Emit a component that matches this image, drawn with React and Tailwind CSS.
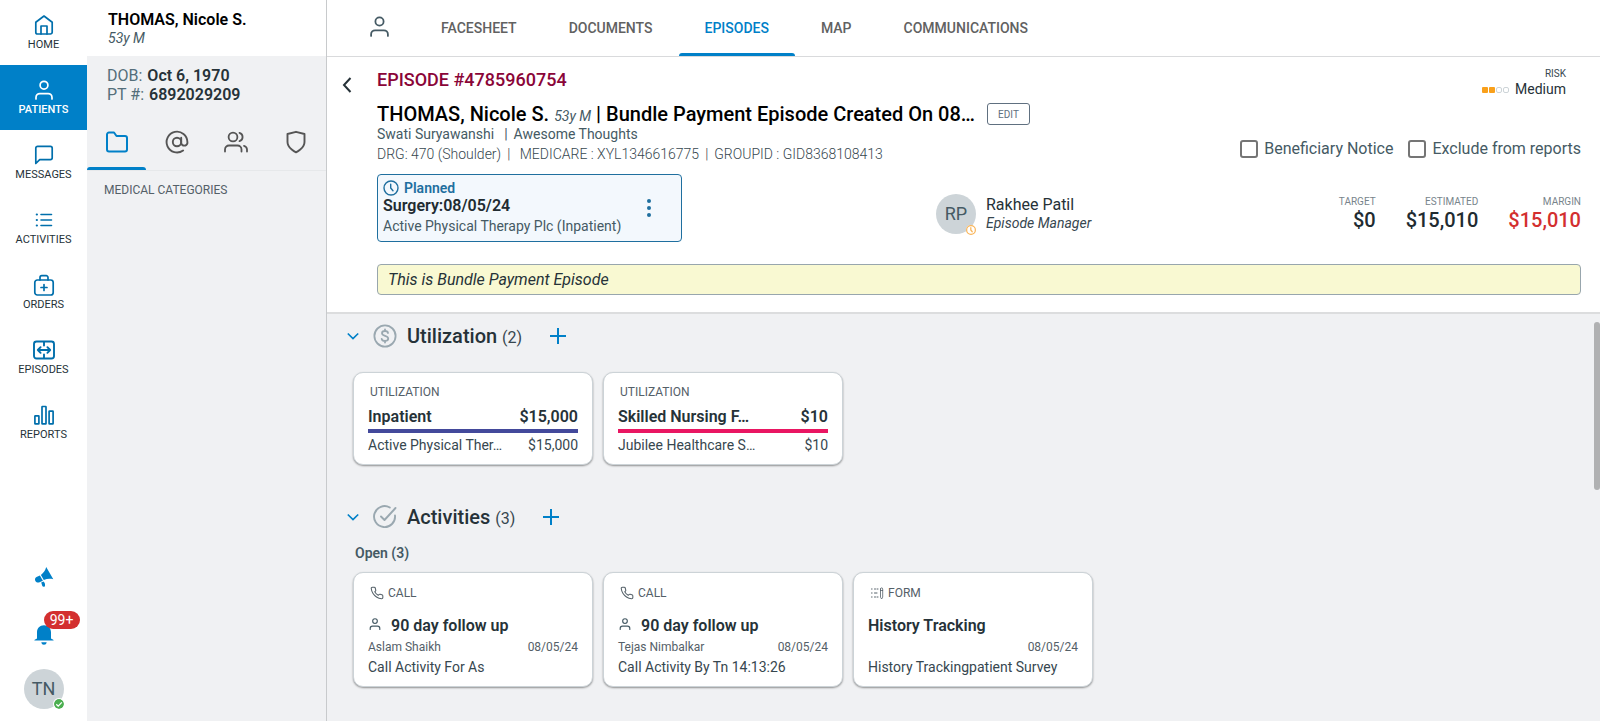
import React from "react";

function Icon({ size = 20, box = 20, stroke = 1.5, className = "", children }) {
  return (
    <svg
      width={size}
      height={size}
      viewBox={`0 0 ${box} ${box}`}
      fill="none"
      stroke="currentColor"
      strokeWidth={stroke}
      strokeLinecap="round"
      strokeLinejoin="round"
      className={`shrink-0 ${className}`}
      aria-hidden="true"
    >
      {children}
    </svg>
  );
}

const HomeIcon = () => (
  <Icon stroke={1.7}>
    <path d="M1.8 7.2 10 1l8.2 6.2v10a1.8 1.8 0 0 1-1.8 1.8H3.6a1.8 1.8 0 0 1-1.8-1.8z" />
    <path d="M7 19v-8h6v8" />
  </Icon>
);
const PersonIcon = ({ size = 20, stroke = 1.7 }) => (
  <Icon size={size} stroke={stroke}>
    <circle cx="10" cy="5.2" r="3.9" />
    <path d="M2 19v-1.6A3.8 3.8 0 0 1 5.8 13.6h8.4a3.8 3.8 0 0 1 3.8 3.8V19" />
  </Icon>
);
const MessageIcon = () => (
  <Icon stroke={1.7}>
    <path d="M1.8 18.5V3.200A1.800 1.800 0 0 1 3.600 1.400h12.800a1.800 1.800 0 0 1 1.800 1.800v9.600a1.800 1.800 0 0 1-1.800 1.800H5.700z" />
  </Icon>
);
const ListIcon = () => (
  <Icon stroke={1.6}>
    <path d="M7 4.500h10.500M7 10h10.500M7 15.500h10.500" />
    <path d="M2.800 4.500h.1M2.800 10h.1M2.800 15.500h.1" strokeWidth="2.200" />
  </Icon>
);
const OrdersIcon = () => (
  <Icon size={22} box={22} stroke={1.7}>
    <rect x="1.800" y="6" width="18.400" height="15" rx="2.500" />
    <path d="M7 6V3.500A1.800 1.800 0 0 1 8.800 1.700h4.400A1.800 1.800 0 0 1 15 3.500V6M11 10.500v6M8 13.500h6" />
  </Icon>
);
const EpisodesIcon = () => (
  <Icon size={22} box={22} stroke={1.9}>
    <rect x="1" y="2.500" width="20" height="17" rx="2.500" />
    <path d="M11 3v3.500M11 15.500V19M4.800 11h12.400M7.600 8.200 4.800 11l2.800 2.800M14.400 8.200l2.800 2.800-2.800 2.800" />
  </Icon>
);
const ReportsIcon = () => (
  <Icon stroke={1.7}>
    <rect x=".9" y="10.800" width="4" height="8" rx=".4" />
    <rect x="8" y="1.500" width="4" height="17.300" rx=".4" />
    <rect x="15.100" y="6.200" width="4" height="12.600" rx=".4" />
  </Icon>
);
const FolderIcon = () => (
  <Icon size={24} box={24} stroke={2}>
    <path d="M22 19.500a2 2 0 0 1-2 2H4a2 2 0 0 1-2-2v-15a2 2 0 0 1 2-2h5l2.500 3.500H20a2 2 0 0 1 2 2z" />
  </Icon>
);
const AtIcon = () => (
  <Icon size={24} box={24} stroke={1.900}>
    <circle cx="12" cy="12" r="4.200" />
    <path d="M16.200 7.800v5.400a3.200 3.200 0 0 0 6.200 0V12a10.400 10.400 0 1 0-4.300 8.500" />
  </Icon>
);
const PeopleIcon = () => (
  <Icon size={24} box={24} stroke={1.800}>
    <circle cx="9" cy="7" r="4.400" />
    <path d="M1 21.500v-2a4 4 0 0 1 4-4h8.500a4 4 0 0 1 4 4v2M15.500 2.800a4.400 4.400 0 0 1 0 8.400M20 15.800a4 4 0 0 1 3 3.800v1.900" />
  </Icon>
);
const ShieldIcon = () => (
  <Icon size={24} box={24} stroke={1.900}>
    <path d="M12 22.300s8.500-3.800 8.500-10.300V4L12 1.800 3.500 4v8c0 6.500 8.500 10.300 8.500 10.300z" />
  </Icon>
);
const ClockIcon = ({ size = 16, stroke = 1.400 }) => (
  <Icon size={size} box={16} stroke={stroke}>
    <circle cx="8" cy="8" r="7" />
    <path d="M7.700 4.200V8l2.300 2.800" />
  </Icon>
);
const PhoneIcon = () => (
  <Icon size={14} box={24} stroke={1.800}>
    <path d="M22 16.920v3a2 2 0 0 1-2.180 2 19.790 19.790 0 0 1-8.630-3.070 19.500 19.500 0 0 1-6-6 19.790 19.790 0 0 1-3.070-8.670A2 2 0 0 1 4.110 2h3a2 2 0 0 1 2 1.720c.127.960.361 1.903.700 2.810a2 2 0 0 1-.450 2.110L8.090 9.910a16 16 0 0 0 6 6l1.270-1.270a2 2 0 0 1 2.110-.450c.907.339 1.850.573 2.810.700A2 2 0 0 1 22 16.920z" />
  </Icon>
);
const FormIcon = () => (
  <Icon size={14} box={14} stroke={1}>
    <path d="M1.500 3h.6M1.500 7h.6M1.500 11h.6M4.500 3h1M7 3h1M4.500 7h2.500M4.500 11h1M7 11h1" />
    <path d="M10.500 3v8.200l1.100 1.800 1.100-1.800V3a1.100 1.100 0 0 0-2.200 0zM10.500 4.500h2.200" strokeWidth=".8" />
  </Icon>
);
const DollarIcon = () => (
  <Icon size={24} box={24} stroke={1.800}>
    <circle cx="12" cy="12" r="10.600" />
    <path d="M15 9c-.2-1.300-1.300-2-3-2s-3 .9-3 2.300c0 3.400 6.200 1.900 6.200 5.300 0 1.500-1.300 2.400-3.200 2.400s-3.100-.8-3.300-2.200M12 5.400V7M12 17v1.600" />
  </Icon>
);
const CheckCircleIcon = () => (
  <Icon size={24} box={24} stroke={1.900}>
    <path d="M22 10.500a10.500 10.500 0 1 1-5.200-8" />
    <path d="m8 11.500 3.500 3.500L22.500 3" />
  </Icon>
);
const ChevronDown = () => (
  <Icon size={12} box={12} stroke={1.700}>
    <path d="M.8 3.500 6 8.500l5.200-5" strokeLinecap="butt" strokeLinejoin="miter" />
  </Icon>
);
const PlusIcon = () => (
  <Icon size={16} box={16} stroke={2}>
    <path d="M8 0v16M0 8h16" strokeLinecap="butt" />
  </Icon>
);
const MegaphoneIcon = () => (
  <svg width="20" height="20" viewBox="0 0 20 20" className="shrink-0" fill="currentColor" aria-hidden="true">
    <path d="M12.200 0 19.300 12.200C16 11.400 13 11.600 9.800 12.900L6.900 7.900C9.500 6 11.300 3.500 12.200 0z" />
    <path d="M5.900 8.500 8.900 13.700 5.600 15.300C4 16 2.300 15.500 1.400 14 .5 12.400 1 10.700 2.500 9.900z" />
    <path d="M7.200 15.600 9.600 14.400l1.400 2.200v2.400c0 .9-2.300 1-2.700.1z" />
  </svg>
);
const BellIcon = () => (
  <svg width="20" height="20" viewBox="0 0 20 20" className="shrink-0" fill="currentColor" aria-hidden="true">
    <path d="M10 .3c4.200 0 7 2.900 7 7v6.200c0 .5 2.700.8 2.700 1.900H.3c0-1.100 2.700-1.400 2.700-1.900V7.300c0-4.100 2.800-7 7-7zM7.300 17.300h5.400c-.2 1.700-1.300 2.500-2.700 2.500s-2.500-.8-2.700-2.500z" />
  </svg>
);

const NAV = [
  ["HOME", <HomeIcon />],
  ["PATIENTS", <PersonIcon />],
  ["MESSAGES", <MessageIcon />],
  ["ACTIVITIES", <ListIcon />],
  ["ORDERS", <OrdersIcon />],
  ["EPISODES", <EpisodesIcon />],
  ["REPORTS", <ReportsIcon />],
];

function NavRail() {
  return (
    <nav className="flex w-[87px] shrink-0 flex-col bg-white text-[#006fac]">
      {NAV.map(([label, icon]) => {
        const active = label === "PATIENTS";
        return (
          <a
            key={label}
            href="#"
            className={`flex h-[65px] flex-col items-center justify-center gap-px pt-0.5 ${active ? "bg-[#0080c8] text-white" : ""}`}
          >
            <span className="flex h-[22px] items-center">{icon}</span>
            <span className={`text-[11px] leading-4 ${active ? "font-medium" : "text-[#263238]"}`}>{label}</span>
          </a>
        );
      })}
      <div className="mt-auto flex flex-col items-center pb-3 text-[#0080c8]">
        <button type="button" aria-label="Announcements" className="mb-[38px]">
          <MegaphoneIcon />
        </button>
        <button type="button" aria-label="Notifications" className="relative mb-6">
          <BellIcon />
          <span className="absolute -top-3.5 left-2.5 flex h-[18px] w-9 items-center justify-center rounded-full bg-[#d32f2f] text-sm text-white">
            99+
          </span>
        </button>
        <button type="button" className="relative flex size-10 items-center justify-center rounded-full bg-[#cdd4d8] text-lg text-[#455a64]">
          TN
          <svg width="10" height="10" viewBox="0 0 10 10" className="absolute right-0 bottom-0 rounded-full ring-1 ring-white" aria-hidden="true">
            <circle cx="5" cy="5" r="5" fill="#4caf50" />
            <path d="m2.300 5.200 1.900 1.900L7.800 3.400" fill="none" stroke="#fff" strokeWidth="1.300" />
          </svg>
        </button>
      </div>
    </nav>
  );
}

const SIDE_TABS = [
  ["Categories", <FolderIcon />],
  ["Contact", <AtIcon />],
  ["Care team", <PeopleIcon />],
  ["Insurance", <ShieldIcon />],
];

function PatientPanel() {
  return (
    <aside className="flex w-[240px] shrink-0 flex-col border-r border-[#c8cacc]">
      <div className="flex h-14 flex-col bg-white pt-[9px] pl-[21px]">
        <span className="text-base leading-[22px] font-semibold text-black">THOMAS, Nicole S.</span>
        <span className="text-sm leading-[14px] text-[#455a64] italic">53y M</span>
      </div>
      <dl className="flex flex-col pt-2.5 pl-5 text-base leading-[19px] text-[#546e7a]">
        <div className="flex gap-[5px]">
          <dt>DOB:</dt>
          <dd className="font-semibold text-[#263238]">Oct 6, 1970</dd>
        </div>
        <div className="flex gap-[5px]">
          <dt>PT #:</dt>
          <dd className="font-semibold text-[#263238]">6892029209</dd>
        </div>
      </dl>
      <div className="mt-2.5 grid h-[57px] grid-cols-4 border-b border-[#e6e8ea]">
        {SIDE_TABS.map(([label, icon], i) => (
          <button
            key={label}
            type="button"
            aria-label={label}
            className={`flex flex-col items-center justify-between pt-4 ${i === 0 ? "text-[#0080c8]" : "text-[#555]"}`}
          >
            {icon}
            <span className={`h-[3px] w-[59px] rounded-t ${i === 0 ? "bg-[#0080c8]" : ""}`} />
          </button>
        ))}
      </div>
      <h2 className="pt-2.5 pl-[17px] text-xs leading-[18px] text-[#546068]">MEDICAL CATEGORIES</h2>
    </aside>
  );
}

const TABS = ["FACESHEET", "DOCUMENTS", "EPISODES", "MAP", "COMMUNICATIONS"];

function TopTabs() {
  return (
    <div className="flex h-[57px] shrink-0 items-stretch border-b border-[#d9dadc] bg-white pl-[42px]">
      <button type="button" aria-label="Patient" className="mr-[25px] pb-1 text-[#455a64]">
        <PersonIcon size={21} />
      </button>
      {TABS.map((t) => (
        <button
          key={t}
          type="button"
          className={`relative flex items-center px-[26px] text-sm font-medium ${t === "EPISODES" ? "text-[#0080c8]" : "text-[#616161]"}`}
        >
          {t}
          {t === "EPISODES" && <span className="absolute inset-x-0 bottom-0 h-[3px] rounded-t bg-[#0080c8]" />}
        </button>
      ))}
    </div>
  );
}

function Check({ label }) {
  return (
    <label className="flex items-center gap-1.5 text-base text-[#455a64]">
      <input type="checkbox" className="size-[18px] appearance-none rounded-[3px] border-2 border-[#757575] bg-white" />
      {label}
    </label>
  );
}

function Money({ label, value, tone }) {
  return (
    <div className="flex flex-col items-end">
      <span className="text-[10px] leading-3 text-[#78848b]">{label}</span>
      <span className={`text-xl leading-6 font-medium ${tone}`}>{value}</span>
    </div>
  );
}

function EpisodeHeader() {
  return (
    <header className="flex shrink-0 border-b-2 border-[#dcddde] bg-white pr-[19px] pb-[17px]">
      <div className="flex w-[50px] shrink-0 justify-start pt-5 pl-[15px]">
        <button type="button" aria-label="Back" className="h-4 text-[#263238]">
          <svg width="10" height="16" viewBox="0 0 10 16" fill="none" stroke="currentColor" strokeWidth="2" aria-hidden="true">
            <path d="M8.500 1 2 8l6.500 7" />
          </svg>
        </button>
      </div>
      <div className="flex min-w-0 flex-1 flex-col">
        <div className="flex justify-between">
          <div className="flex min-w-0 flex-col">
            <h1 className="pt-3 text-lg leading-[22px] font-medium text-[#8a0538]">EPISODE #4785960754</h1>
            <div className="flex items-center pt-2.5">
              <p className="w-[600px] text-xl leading-[26px] font-medium whitespace-nowrap text-black">
                THOMAS, Nicole S. <span className="text-sm font-normal text-[#455a64] italic">53y M</span> | Bundle Payment Episode Created On 08…
              </p>
              <button type="button" className="ml-2.5 h-[22px] w-[43px] rounded-[3px] border border-[#607080] text-[10px] text-[#607080]">
                EDIT
              </button>
            </div>
            <p className="text-sm leading-[14px] text-[#455a64]">
              Swati Suryawanshi<span className="px-1.5 pl-2.5">|</span>Awesome Thoughts
            </p>
            <p className="pt-1.5 text-sm leading-[14px] font-light text-[#37474f]">
              DRG: 470 (Shoulder)<span className="px-1.5">|</span> MEDICARE : XYL1346616775<span className="px-1.5">|</span>GROUPID : GID8368108413
            </p>
          </div>
          <div className="flex shrink-0 flex-col items-end justify-between pt-[11px]">
            <div className="flex flex-col items-end pr-[15px]">
              <span className="text-[10px] leading-3 text-[#37474f]">RISK</span>
              <span className="flex items-center gap-1.5 text-sm leading-[18px] text-[#263238]">
                <span className="flex gap-px pt-0.5">
                  <i className="size-1.5 rounded-[1px] bg-[#f9a01b]" />
                  <i className="size-1.5 rounded-[1px] bg-[#f9a01b]" />
                  <i className="size-1.5 rounded-[2px] border border-[#cdd4d8]" />
                  <i className="size-1.5 rounded-[2px] border border-[#cdd4d8]" />
                </span>
                Medium
              </span>
            </div>
            <div className="flex gap-[15px]">
              <Check label="Beneficiary Notice" />
              <Check label="Exclude from reports" />
            </div>
          </div>
        </div>

        <div className="mt-[13px] grid grid-cols-[559px_1fr_auto] items-center">
          <div className="flex h-[68px] w-[305px] items-center rounded border border-[#1f6f9f] bg-[#f3f8fd] pl-[5px]">
            <div className="flex flex-1 flex-col">
              <span className="flex items-center gap-[5px] text-sm leading-4 font-semibold text-[#1f6f9f]">
                <ClockIcon />
                Planned
              </span>
              <span className="text-base leading-5 font-semibold text-[#212b31]">Surgery:08/05/24</span>
              <span className="text-sm leading-5 text-[#455a64]">Active Physical Therapy Plc (Inpatient)</span>
            </div>
            <button type="button" aria-label="More actions" className="mr-[30px] text-[#1f6f9f]">
              <svg width="4" height="18" viewBox="0 0 4 18" fill="currentColor" aria-hidden="true">
                <circle cx="2" cy="2" r="2" />
                <circle cx="2" cy="9" r="2" />
                <circle cx="2" cy="16" r="2" />
              </svg>
            </button>
          </div>
          <div className="flex items-center gap-2.5 pt-3">
            <div className="relative flex size-10 items-center justify-center rounded-full bg-[#cdd4d8] text-lg text-[#455a64]">
              RP
              <span className="absolute right-0 -bottom-px rounded-full bg-white text-[#f9b55a]">
                <ClockIcon size={10} stroke={2} />
              </span>
            </div>
            <div className="flex flex-col">
              <span className="text-base leading-[18px] text-[#263238]">Rakhee Patil</span>
              <span className="text-sm leading-[18px] text-[#37474f] italic">Episode Manager</span>
            </div>
          </div>
          <div className="flex gap-[30px] pt-3">
            <Money label="TARGET" value="$0" tone="text-[#212b31]" />
            <Money label="ESTIMATED" value="$15,010" tone="text-[#212b31]" />
            <Money label="MARGIN" value="$15,010" tone="text-[#d32f2f]" />
          </div>
        </div>

        <p className="mt-[22px] rounded border border-[#98a6ad] bg-[#f9f9d2] px-2.5 text-base leading-[29px] text-[#263238] italic">
          This is Bundle Payment Episode
        </p>
      </div>
    </header>
  );
}

function SectionTitle({ icon, title, count }) {
  return (
    <div className="flex h-8 items-center pl-5">
      <button type="button" aria-label={`Collapse ${title}`} className="text-[#0080c8]">
        <ChevronDown />
      </button>
      <span className="ml-3.5 text-[#9aa8b0]">{icon}</span>
      <h2 className="ml-2.5 text-xl font-medium text-[#263238]">
        {title} <span className="text-base font-normal text-[#37474f]">({count})</span>
      </h2>
      <button type="button" aria-label={`Add to ${title}`} className="ml-7 text-[#0080c8]">
        <PlusIcon />
      </button>
    </div>
  );
}

const CARD = "w-[240px] rounded-[10px] border border-[#ccd3d7] bg-white px-3.5 shadow-[0_1px_2px_rgba(0,0,0,0.4)]";

function UtilizationCard({ name, amount, provider, bar }) {
  return (
    <article className={`${CARD} pt-2.5 pb-2`}>
      <p className="pl-0.5 text-xs leading-[18px] text-[#546068]">UTILIZATION</p>
      <div className={`mt-1 flex justify-between border-b-4 pt-px pb-px text-base leading-[22px] font-semibold text-[#263238] ${bar}`}>
        <span>{name}</span>
        <span>{amount}</span>
      </div>
      <div className="flex justify-between pt-px text-sm leading-[22px] text-[#37474f]">
        <span>{provider}</span>
        <span>{amount}</span>
      </div>
    </article>
  );
}

function ActivityCard({ kind, icon, title, person, detail }) {
  return (
    <article className={`${CARD} pt-3 pb-[9px]`}>
      <p className="flex items-center gap-1 pl-0.5 text-xs leading-4 text-[#546068]">
        {icon}
        {kind}
      </p>
      <h3 className="mt-3.5 flex items-center text-base leading-[22px] font-semibold text-[#263238]">
        {person && (
          <span className="mr-2.5 pb-1 pl-px text-[#455a64]">
            <PersonIcon size={12} stroke={1.900} />
          </span>
        )}
        {title}
      </h3>
      <div className="flex justify-between text-xs leading-5 text-[#546068]">
        <span>{person}</span>
        <span>08/05/24</span>
      </div>
      <p className="text-sm leading-5 text-[#37474f]">{detail}</p>
    </article>
  );
}

export default function App() {
  return (
    <div className="flex h-screen overflow-hidden bg-[#f0f1f3] font-['Roboto',sans-serif] antialiased">
      <NavRail />
      <PatientPanel />
      <main className="flex min-w-0 flex-1 flex-col">
        <TopTabs />
        <EpisodeHeader />
        <div className="flex min-h-0 flex-1">
          <div className="min-w-0 flex-1 overflow-hidden">
            <section className="pt-[6px]">
              <SectionTitle icon={<DollarIcon />} title="Utilization" count={2} />
              <div className="mt-5 flex gap-2.5 pl-[26px]">
                <UtilizationCard name="Inpatient" amount="$15,000" provider="Active Physical Ther…" bar="border-[#43499b]" />
                <UtilizationCard name="Skilled Nursing F…" amount="$10" provider="Jubilee Healthcare S…" bar="border-[#e91662]" />
              </div>
            </section>
            <section className="pt-9">
              <SectionTitle icon={<CheckCircleIcon />} title="Activities" count={3} />
              <p className="mt-2.5 pl-7 text-sm leading-5 font-semibold text-[#455a64]">Open (3)</p>
              <div className="mt-[9px] flex gap-2.5 pl-[26px]">
                <ActivityCard kind="CALL" icon={<PhoneIcon />} title="90 day follow up" person="Aslam Shaikh" detail="Call Activity For As" />
                <ActivityCard kind="CALL" icon={<PhoneIcon />} title="90 day follow up" person="Tejas Nimbalkar" detail="Call Activity By Tn 14:13:26" />
                <ActivityCard kind="FORM" icon={<FormIcon />} title="History Tracking" detail="History Trackingpatient Survey" />
              </div>
            </section>
          </div>
          <div className="w-1.5 shrink-0 pt-2">
            <div className="h-[168px] rounded-full bg-[#b0b1b2]" />
          </div>
        </div>
      </main>
    </div>
  );
}
